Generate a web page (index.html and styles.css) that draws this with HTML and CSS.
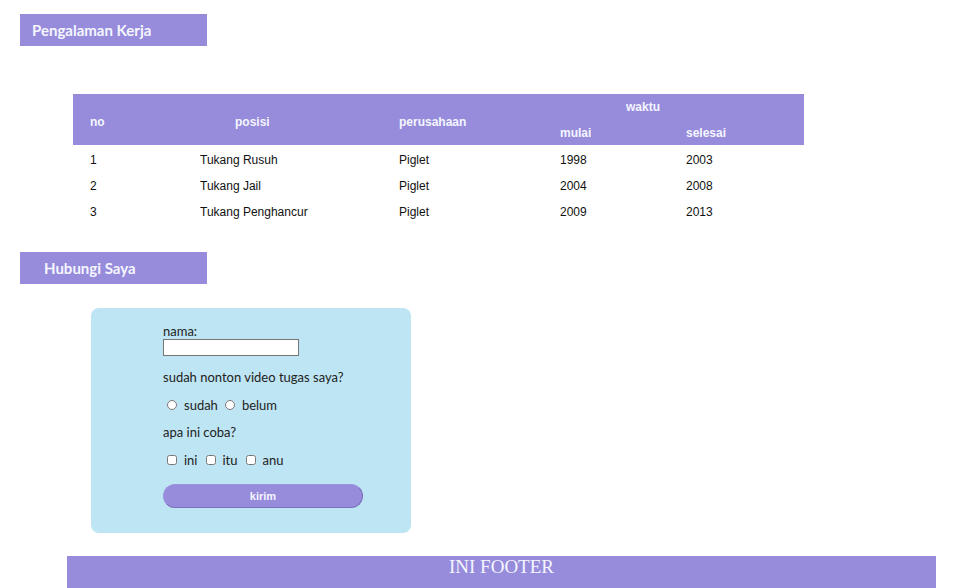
FILE: index.html
```html
<!DOCTYPE html>
<html>
<head>
<meta charset="utf-8">
<link rel="stylesheet" href="styles.css">
</head>
<body>
<h2 class="judul judul-kerja">Pengalaman Kerja</h2>
<table class="tabel">
  <colgroup>
    <col class="w-no"><col class="w-posisi"><col class="w-pers"><col class="w-mulai"><col class="w-selesai">
  </colgroup>
  <thead>
    <tr class="h1">
      <th rowspan="2" class="rs">no</th>
      <th rowspan="2" class="rs c-posisi">posisi</th>
      <th rowspan="2" class="rs">perusahaan</th>
      <th colspan="2" class="c-waktu">waktu</th>
    </tr>
    <tr class="h2">
      <th>mulai</th>
      <th>selesai</th>
    </tr>
  </thead>
  <tbody>
    <tr><td>1</td><td>Tukang Rusuh</td><td>Piglet</td><td>1998</td><td>2003</td></tr>
    <tr><td>2</td><td>Tukang Jail</td><td>Piglet</td><td>2004</td><td>2008</td></tr>
    <tr><td>3</td><td>Tukang Penghancur</td><td>Piglet</td><td>2009</td><td>2013</td></tr>
  </tbody>
</table>
<h2 class="judul judul-hubungi">Hubungi Saya</h2>
<form class="form">
  <label class="lbl">nama:</label>
  <input type="text" class="inp">
  <p class="q q1">sudah nonton video tugas saya?</p>
  <div class="opts opts-radio">
    <input type="radio" name="v" class="opt"><span class="opt-t">sudah</span>
    <input type="radio" name="v" class="opt"><span class="opt-t">belum</span>
  </div>
  <p class="q q2">apa ini coba?</p>
  <div class="opts opts-check">
    <input type="checkbox" class="opt"><span class="opt-t">ini</span>
    <input type="checkbox" class="opt"><span class="opt-t">itu</span>
    <input type="checkbox" class="opt"><span class="opt-t">anu</span>
  </div>
  <button type="button" class="btn">kirim</button>
</form>
<footer class="footer">INI FOOTER</footer>
</body>
</html>
```
FILE: styles.css
```css
html, body { margin: 0; padding: 0; background: #fff; }
body { font-family: "Lato", "Open Sans", sans-serif; color: #111; overflow: hidden; }

.judul {
  margin: 0 0 0 20px;
  width: 187px;
  height: 32px;
  box-sizing: border-box;
  background: #978bdb;
  color: #f4f6ff;
  font-size: 15px;
  font-weight: bold;
  line-height: 32px;
}
.judul-kerja { margin-top: 14px; padding-left: 12px; }
.judul-hubungi { margin-top: 29px; padding-left: 24px; }

.tabel {
  margin: 48px 0 0 73px;
  width: 731px;
  table-layout: fixed;
  border-collapse: collapse;
  font-family: "Liberation Sans", Arial, sans-serif;
  font-size: 12px;
}
.w-no { width: 110px; }
.w-posisi { width: 199px; }
.w-pers { width: 161px; }
.w-mulai { width: 126px; }
.w-selesai { width: 135px; }
.tabel thead { background: #978bdb; color: #f4f6ff; }
.tabel th { font-weight: bold; text-align: left; padding: 0 0 0 17px; vertical-align: middle; }
.tabel .h1 th { height: 26px; }
.tabel .h2 th { height: 25px; }
.tabel .rs { padding-top: 4px; }
.tabel .c-posisi { padding-left: 52px; }
.tabel .c-waktu { padding-left: 83px; }
.tabel td { padding: 8px 17px 4px; line-height: 14px; }

.form {
  margin: 24px 0 0 91px;
  width: 320px;
  box-sizing: border-box;
  padding: 16px 0 25px 72px;
  background: #bee5f3;
  border-radius: 8px;
  font-size: 13px;
  color: #222;
}
.lbl { display: block; line-height: 15px; }
.inp {
  display: block;
  margin: 0;
  width: 136px;
  height: 17px;
  box-sizing: border-box;
  border: 1px solid #767676;
  padding: 0 2px;
  background: #fff;
}
.q { margin: 13px 0 0; line-height: 16px; }
.q2 { margin-top: 11px; }
.opts { display: flex; align-items: center; margin-top: 12px; height: 16px; }
.opts-check { margin-top: 12px; }
.opt { margin: 0 7px 0 7px; width: 10px; height: 10px; }
.opts-check .opt { margin-left: 8px; }
.opts .opt:first-child { margin-left: 4px; }
.opt-t { line-height: 16px; }
.btn {
  display: block;
  margin-top: 16px;
  width: 200px;
  height: 24px;
  border-radius: 12px;
  background: #978bdb;
  border: 1px solid #7a6fb8;
  border-top-color: #9d92de;
  border-left-color: #9d92de;
  color: #f4f6ff;
  font-family: "Liberation Sans", Arial, sans-serif;
  font-size: 11px;
  font-weight: bold;
}

.footer {
  margin: 23px 0 0 67px;
  width: 869px;
  height: 40px;
  background: #978bdb;
  color: #f4f6ff;
  font-family: "Liberation Serif", "Times New Roman", serif;
  font-size: 19px;
  text-align: center;
  line-height: 22px;
}
```
